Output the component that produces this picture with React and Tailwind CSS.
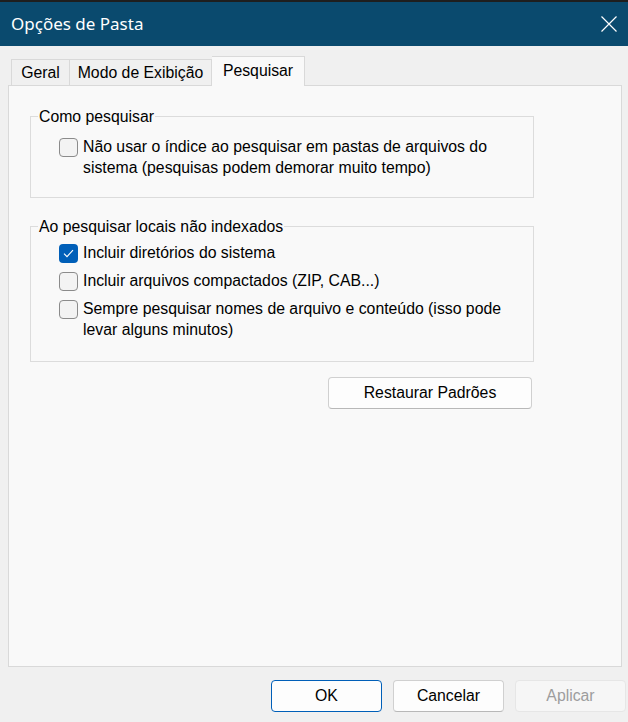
import React from "react";

const Checkbox = ({ checked }) => {
  if (checked) {
    return (
      <span className="mt-[2px] flex h-[19px] w-[19px] shrink-0 items-center justify-center rounded-[4px] bg-[#005fb8]">
        <svg width="11" height="9" viewBox="0 0 11 9" fill="none">
          <path d="M1 4.6 L4 7.6 L10 1.2" stroke="white" strokeWidth="1.1" />
        </svg>
      </span>
    );
  }
  return (
    <span className="mt-[2px] h-[19px] w-[19px] shrink-0 rounded-[4px] border border-[#8b8b8b] bg-[#f3f3f3]" />
  );
};

const Option = ({ checked, children }) => (
  <div className="flex gap-[5px]">
    <Checkbox checked={checked} />
    <span className="leading-[21px]">{children}</span>
  </div>
);

const Group = ({ title, className, children }) => (
  <fieldset className={"ml-[21px] w-[504px] border border-[#dcdcdc] " + className}>
    <legend className="ml-[7px] px-[1px] leading-[21px]">{title}</legend>
    <div className="pl-[28px]">{children}</div>
  </fieldset>
);

const App = () => {
  return (
    <div className="flex h-[722px] w-[628px] flex-col overflow-hidden bg-[#f0f0f0] font-['Liberation_Sans',Arial,sans-serif] text-[15.8px] text-black">
      <div className="flex h-[46px] shrink-0 items-center justify-between border-t-2 border-[#1e1e1e] bg-[#0a4a6e] pl-[11px] pr-[11px]">
        <span className="font-['Noto_Sans',sans-serif] text-[17px] text-white">Opções de Pasta</span>
        <svg width="16" height="16" viewBox="0 0 16 16" fill="none">
          <path d="M0.5 0.5 L15.5 15.5 M15.5 0.5 L0.5 15.5" stroke="white" strokeWidth="1.2" />
        </svg>
      </div>

      <div className="mt-[10px] flex h-[29px] items-end pl-[11px]">
        <div className="flex h-[26px] w-[59px] items-center justify-center border border-b-0 border-[#d9d9d9] bg-[#f0f0f0] pt-[1px]">
          Geral
        </div>
        <div className="flex h-[26px] w-[142px] items-center justify-center border border-b-0 border-l-0 border-[#d9d9d9] bg-[#f0f0f0] pt-[1px]">
          Modo de Exibição
        </div>
        <div className="relative z-10 -mb-px flex h-[30px] w-[93px] items-center justify-center border border-b-0 border-l-0 border-[#d9d9d9] bg-[#f9f9f9] pb-[1px]">
          Pesquisar
        </div>
      </div>

      <div className="ml-[8px] mr-[6px] flex h-[582px] flex-col border border-[#d9d9d9] bg-[#f9f9f9] pt-[20px]">
        <Group title="Como pesquisar" className="pb-[19px] pt-[9px]">
          <Option>
            Não usar o índice ao pesquisar em pastas de arquivos do
            <br />
            sistema (pesquisas podem demorar muito tempo)
          </Option>
        </Group>

        <Group title="Ao pesquisar locais não indexados" className="mt-[18px] pb-[21px] pt-[5px]">
          <div className="flex flex-col gap-[7px]">
            <Option checked>Incluir diretórios do sistema</Option>
            <Option>Incluir arquivos compactados (ZIP, CAB...)</Option>
            <Option>
              Sempre pesquisar nomes de arquivo e conteúdo (isso pode
              <br />
              levar alguns minutos)
            </Option>
          </div>
        </Group>

        <div className="ml-[319px] mt-[15px]">
          <button className="h-[32px] w-[204px] rounded-[4px] border border-[#d0d0d0] border-b-[#b8b8b8] bg-[#fdfdfd]">
            Restaurar Padrões
          </button>
        </div>
      </div>

      <div className="mt-[13px] flex justify-end gap-[11px] pr-[2px]">
        <button className="h-[32px] w-[111px] rounded-[4px] border border-[#005fb8] bg-[#fdfdfd]">OK</button>
        <button className="h-[32px] w-[111px] rounded-[4px] border border-[#d0d0d0] border-b-[#b8b8b8] bg-[#fdfdfd]">
          Cancelar
        </button>
        <button className="h-[32px] w-[111px] rounded-[4px] border border-[#e6e6e6] bg-[#f6f6f6] text-[#9d9d9d]">
          Aplicar
        </button>
      </div>
    </div>
  );
};

export default App;
